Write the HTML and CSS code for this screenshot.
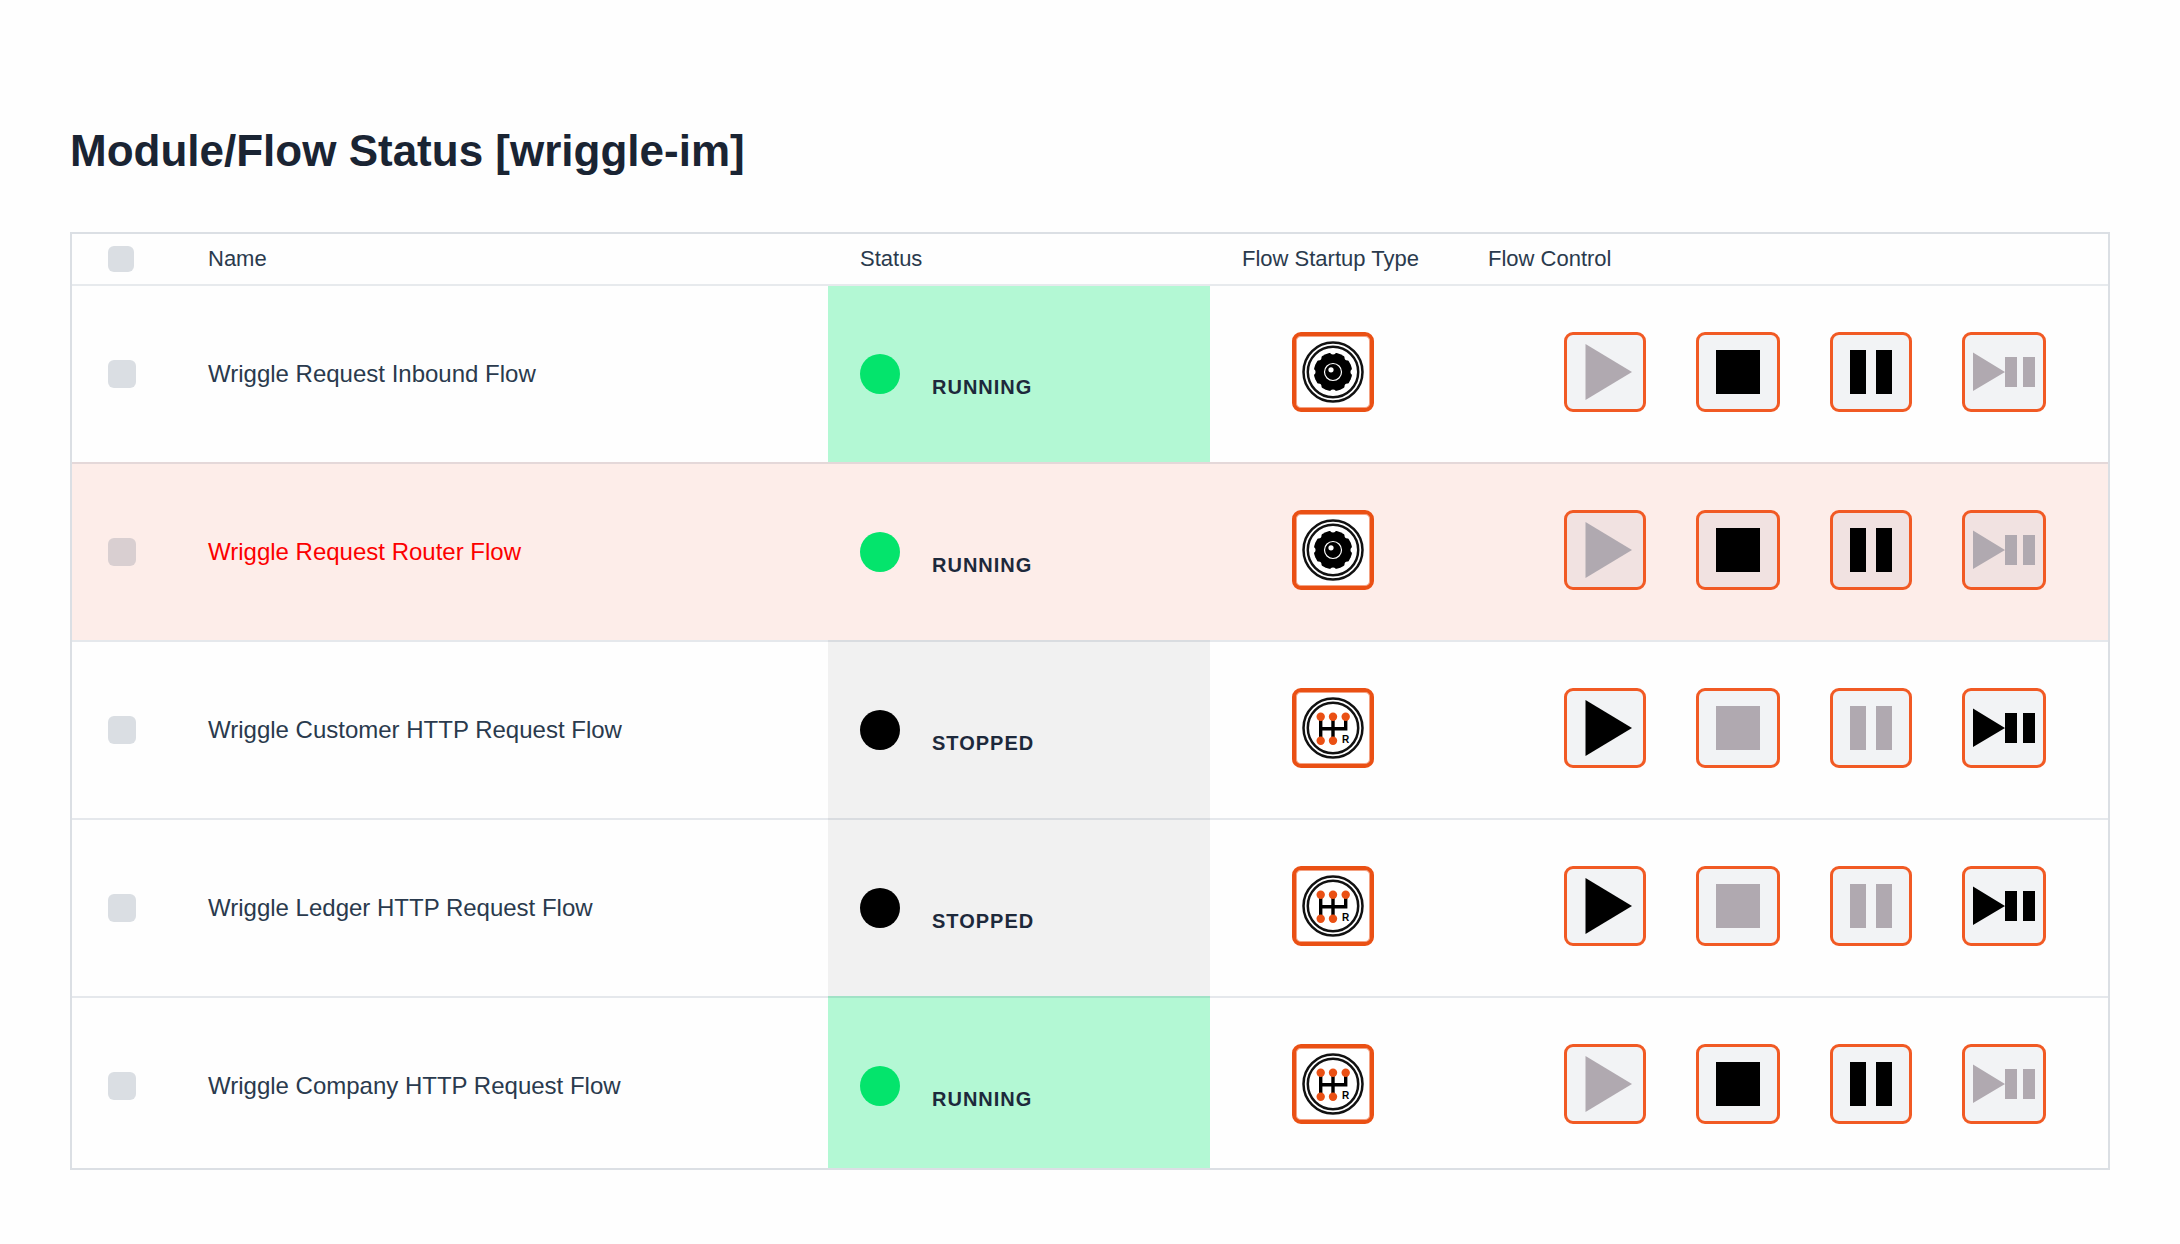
FILE: index.html
```
<!DOCTYPE html>
<html lang="en">
<head>
<meta charset="utf-8">
<meta name="viewport" content="width=device-width, initial-scale=1">
<title>Module/Flow Status [wriggle-im]</title>
<link rel="stylesheet" href="styles.css">
</head>
<body>
<svg class="sprite" aria-hidden="true">
  <symbol id="play" viewBox="0 0 82 80"><path d="M21.500 12L68 40L21.500 68Z"/></symbol>
  <symbol id="stop" viewBox="0 0 84 80"><path d="M20 18h44v44H20Z"/></symbol>
  <symbol id="pause" viewBox="0 0 82 80"><path d="M20 18h16v44H20ZM46 18h16v44H46Z"/></symbol>
  <symbol id="step" viewBox="0 0 84 80"><path d="M11 20.500L43 40L11 59ZM43 25h12v30H43ZM61 25h12v30H61Z"/></symbol>
  <symbol id="auto" viewBox="0 0 82 80">
    <g fill="none" stroke="#111" stroke-width="2.500"><circle cx="41" cy="40" r="29.500"/><circle cx="41" cy="40" r="25.200"/></g>
    <circle cx="41" cy="40" r="19.200"/>
    <g fill="#fff"><circle cx="41" cy="19.500" r="3"/><circle cx="55.500" cy="25.500" r="3"/><circle cx="61.500" cy="40" r="3"/><circle cx="55.500" cy="54.500" r="3"/><circle cx="41" cy="60.500" r="3"/><circle cx="26.500" cy="54.500" r="3"/><circle cx="20.500" cy="40" r="3"/><circle cx="26.500" cy="25.500" r="3"/></g>
    <circle cx="41" cy="40" r="8.500" stroke="#fff" stroke-width="1.200"/>
    <circle cx="39" cy="37.800" r="2.600" fill="#fff"/>
  </symbol>
  <symbol id="manual" viewBox="0 0 82 80">
    <g fill="none" stroke="#111" stroke-width="2.500"><circle cx="41" cy="40" r="29.500"/><circle cx="41" cy="40" r="25.200"/></g>
    <path d="M28.700 28.700V52.700M41 28.700V52.700M53.700 28.700V40.700H28.700" fill="none" stroke="#000" stroke-width="3.400" stroke-linejoin="miter" stroke-linecap="square"/>
    <g fill="#ea5014"><circle cx="28.700" cy="28.700" r="4.200"/><circle cx="41" cy="28.700" r="4.200"/><circle cx="53.700" cy="28.700" r="4.200"/><circle cx="28.700" cy="52.700" r="4.200"/><circle cx="41" cy="52.700" r="4.200"/></g>
    <text x="50" y="55" class="gear-letter">R</text>
  </symbol>
</svg>
<main class="page">
  <h1 class="title">Module/Flow Status [wriggle-im]</h1>
  <table class="flows">
    <colgroup><col class="col-check"><col><col class="col-status"><col class="col-type"><col></colgroup>
    <thead>
      <tr>
        <th class="check"><input type="checkbox" class="box" aria-label="Select all flows"></th>
        <th>Name</th>
        <th>Status</th>
        <th>Flow Startup Type</th>
        <th>Flow Control</th>
      </tr>
    </thead>
    <tbody>
      <tr class="running">
        <td class="check"><input type="checkbox" class="box" id="flow1"></td>
        <td class="name"><label for="flow1">Wriggle Request Inbound Flow</label></td>
        <td class="state"><div class="status"><span class="dot"></span><span class="word">RUNNING</span></div></td>
        <td class="type"><button class="startup" aria-label="Automatic startup"><svg><use href="#auto"/></svg></button></td>
        <td class="control"><div class="controls">
          <button class="btn" aria-label="Start" disabled><svg><use href="#play"/></svg></button>
          <button class="btn wide" aria-label="Stop"><svg><use href="#stop"/></svg></button>
          <button class="btn" aria-label="Pause"><svg><use href="#pause"/></svg></button>
          <button class="btn wide" aria-label="Start paused" disabled><svg><use href="#step"/></svg></button>
        </div></td>
      </tr>
      <tr class="running alert">
        <td class="check"><input type="checkbox" class="box" id="flow2"></td>
        <td class="name"><label for="flow2">Wriggle Request Router Flow</label></td>
        <td class="state"><div class="status"><span class="dot"></span><span class="word">RUNNING</span></div></td>
        <td class="type"><button class="startup" aria-label="Automatic startup"><svg><use href="#auto"/></svg></button></td>
        <td class="control"><div class="controls">
          <button class="btn" aria-label="Start" disabled><svg><use href="#play"/></svg></button>
          <button class="btn wide" aria-label="Stop"><svg><use href="#stop"/></svg></button>
          <button class="btn" aria-label="Pause"><svg><use href="#pause"/></svg></button>
          <button class="btn wide" aria-label="Start paused" disabled><svg><use href="#step"/></svg></button>
        </div></td>
      </tr>
      <tr class="stopped">
        <td class="check"><input type="checkbox" class="box" id="flow3"></td>
        <td class="name"><label for="flow3">Wriggle Customer HTTP Request Flow</label></td>
        <td class="state"><div class="status"><span class="dot"></span><span class="word">STOPPED</span></div></td>
        <td class="type"><button class="startup" aria-label="Manual startup"><svg><use href="#manual"/></svg></button></td>
        <td class="control"><div class="controls">
          <button class="btn" aria-label="Start"><svg><use href="#play"/></svg></button>
          <button class="btn wide" aria-label="Stop" disabled><svg><use href="#stop"/></svg></button>
          <button class="btn" aria-label="Pause" disabled><svg><use href="#pause"/></svg></button>
          <button class="btn wide" aria-label="Start paused"><svg><use href="#step"/></svg></button>
        </div></td>
      </tr>
      <tr class="stopped">
        <td class="check"><input type="checkbox" class="box" id="flow4"></td>
        <td class="name"><label for="flow4">Wriggle Ledger HTTP Request Flow</label></td>
        <td class="state"><div class="status"><span class="dot"></span><span class="word">STOPPED</span></div></td>
        <td class="type"><button class="startup" aria-label="Manual startup"><svg><use href="#manual"/></svg></button></td>
        <td class="control"><div class="controls">
          <button class="btn" aria-label="Start"><svg><use href="#play"/></svg></button>
          <button class="btn wide" aria-label="Stop" disabled><svg><use href="#stop"/></svg></button>
          <button class="btn" aria-label="Pause" disabled><svg><use href="#pause"/></svg></button>
          <button class="btn wide" aria-label="Start paused"><svg><use href="#step"/></svg></button>
        </div></td>
      </tr>
      <tr class="running">
        <td class="check"><input type="checkbox" class="box" id="flow5"></td>
        <td class="name"><label for="flow5">Wriggle Company HTTP Request Flow</label></td>
        <td class="state"><div class="status"><span class="dot"></span><span class="word">RUNNING</span></div></td>
        <td class="type"><button class="startup" aria-label="Manual startup"><svg><use href="#manual"/></svg></button></td>
        <td class="control"><div class="controls">
          <button class="btn" aria-label="Start" disabled><svg><use href="#play"/></svg></button>
          <button class="btn wide" aria-label="Stop"><svg><use href="#stop"/></svg></button>
          <button class="btn" aria-label="Pause"><svg><use href="#pause"/></svg></button>
          <button class="btn wide" aria-label="Start paused" disabled><svg><use href="#step"/></svg></button>
        </div></td>
      </tr>
    </tbody>
  </table>
</main>
</body>
</html>
```
FILE: styles.css
```
* {
  box-sizing: border-box;
}

body {
  margin: 0;
  background: #fefefe;
  color: #2a3a4d;
  font-family: "Liberation Sans", Arial, Helvetica, sans-serif;
}

.sprite {
  display: none;
}

.gear-letter {
  font: bold 10px "Liberation Sans", Arial, sans-serif;
  fill: #000;
}

.page {
  padding: 125px 70px 72px;
}

.title {
  margin: 0 0 55px;
  color: #1a2433;
  font-size: 44px;
  line-height: 52px;
}

.flows {
  width: 100%;
  table-layout: fixed;
  border-collapse: separate;
  border-spacing: 0;
  border: 2px solid #dbdfe4;
}

.col-check {
  width: 104px;
}

.col-status {
  width: 382px;
}

.col-type {
  width: 246px;
}

th {
  height: 52px;
  padding: 0 32px;
  border-bottom: 2px solid #e7eaed;
  font-size: 22px;
  font-weight: normal;
  line-height: 26px;
  text-align: left;
}

td {
  height: 178px;
  padding: 0 32px;
  border-top: 2px solid rgba(13, 43, 74, 0.1);
  font-size: 24px;
  line-height: 28px;
}

tbody tr:first-child td {
  height: 176px;
  border-top: 0;
}

tbody tr:last-child td {
  height: 172px;
  padding-top: 6px;
}

.check {
  padding: 0 36px;
}

.box {
  display: block;
  width: 28px;
  height: 28px;
  margin: 0;
  border-radius: 6px;
  background: rgba(13, 43, 74, 0.15);
  appearance: none;
}

th .box {
  width: 26px;
  height: 26px;
}

.alert td {
  background: #fdede9;
}

.alert .name {
  color: #fc0000;
}

.running:not(.alert) .state {
  background: #b3f8d4;
}

.stopped .state {
  background: #f1f1f1;
}

.status {
  display: flex;
  align-items: baseline;
  gap: 32px;
  height: 40px;
}

.dot {
  flex: none;
  width: 40px;
  height: 40px;
  border-radius: 50%;
  background: #000;
}

.running .dot {
  background: #04e46c;
}

.word {
  color: #1d293b;
  font-size: 20px;
  font-weight: bold;
  letter-spacing: 1px;
  line-height: 20px;
}

td.type,
td.control {
  padding-bottom: 4px;
}

.type button {
  display: block;
  margin: 0 auto;
}

.controls {
  display: flex;
  gap: 50px;
  padding-left: 76px;
}

.startup,
.btn {
  flex: none;
  width: 82px;
  height: 80px;
  padding: 0;
  border-radius: 9px;
  cursor: pointer;
}

.startup {
  border: 4px solid #ea5014;
  background: #fff;
  box-shadow: inset 0 0 0 1px #f4a283;
}

.btn {
  border: 3px solid #f15a24;
  background: rgba(13, 43, 74, 0.05);
}

.btn.wide {
  width: 84px;
}

.btn svg,
.startup svg {
  display: block;
  width: 82px;
  height: 80px;
  margin: -3px;
  fill: #000;
}

.startup svg {
  margin: -4px;
}

.btn.wide svg {
  width: 84px;
}

.btn:disabled svg {
  fill: #b0a9b0;
}
```
